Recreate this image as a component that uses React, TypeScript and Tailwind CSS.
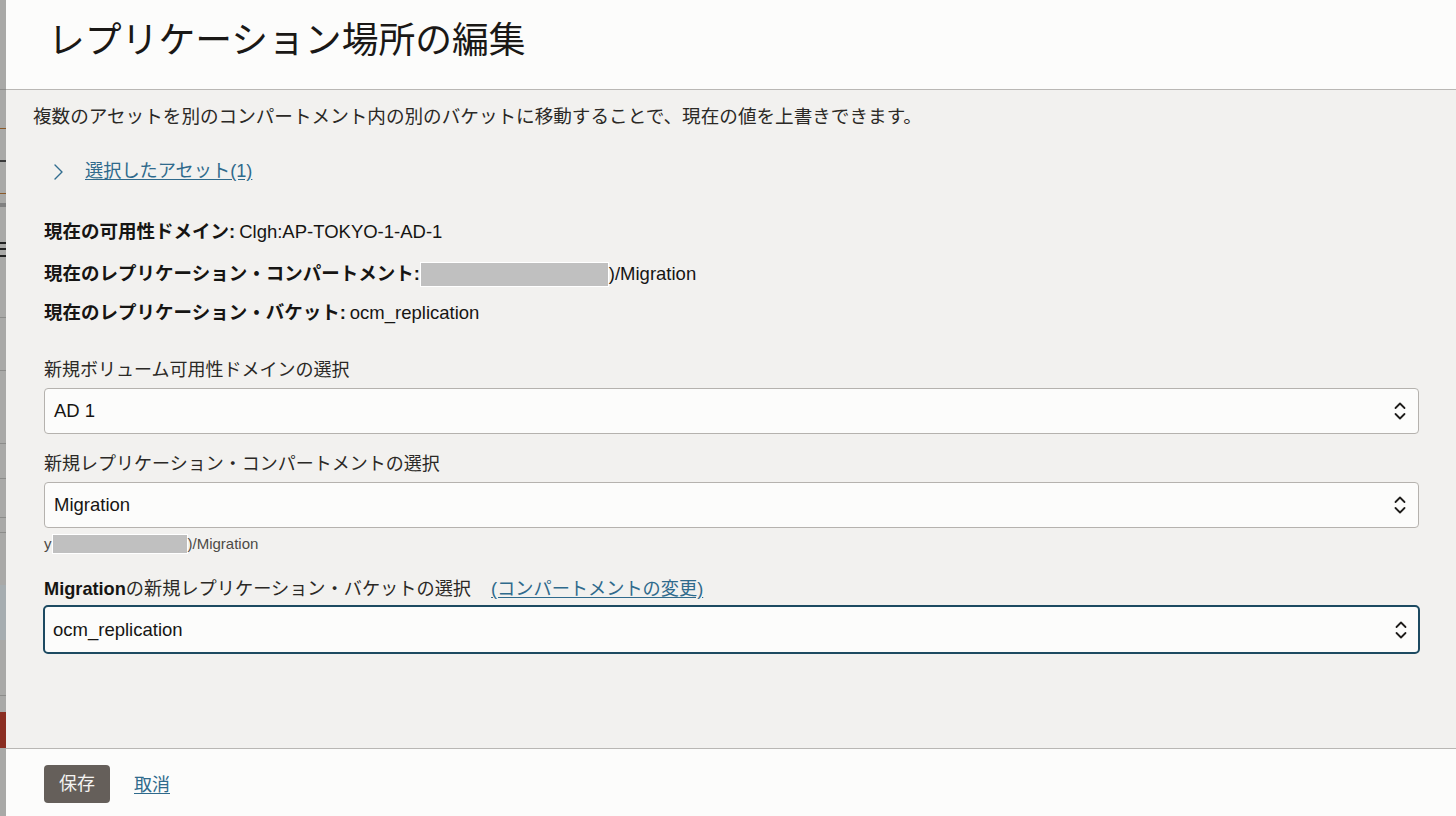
import React from "react";

const FONT = { fontFamily: '"Liberation Sans", "Noto Sans CJK JP", sans-serif' };

// marks on the page behind the panel: [top, height, colour]
const STRIP_MARKS: [number, number, string][] = [
  [89, 1, "#8e8e8c"],
  [128, 1, "#8a5a2a"],
  [160, 2, "#3a3a3a"],
  [193, 1, "#8a5a2a"],
  [203, 4, "#808080"],
  [242, 2, "#222"],
  [248, 2, "#222"],
  [255, 2, "#222"],
  [317, 1, "#8c8c8a"],
  [370, 1, "#8c8c8a"],
  [443, 1, "#8c8c8a"],
  [478, 1, "#8c8c8a"],
  [517, 1, "#8c8c8a"],
  [532, 1, "#8c8c8a"],
  [585, 55, "#a6adb0"],
  [695, 1, "#8c8c8a"],
  [712, 36, "#8b2e22"],
];

function LeftStrip() {
  let y = 0;
  return (
    <div className="w-[6px] shrink-0 bg-[#a9a9a7] flex flex-col">
      {STRIP_MARKS.map(([top, h, c], i) => {
        const gap = top - y;
        y = top + h;
        return <div key={i} style={{ marginTop: gap, height: h, background: c }} />;
      })}
    </div>
  );
}

function UpDown() {
  return (
    <svg width="14" height="22" viewBox="0 0 14 22" fill="none" stroke="#1f1d1b" strokeWidth="1.8" strokeLinecap="round" strokeLinejoin="round">
      <path d="M2.5 8 L7 3.5 L11.5 8" />
      <path d="M2.5 14 L7 18.5 L11.5 14" />
    </svg>
  );
}

function Select({ value, focused }: { value: string; focused?: boolean }) {
  return (
    <div
      className={
        focused
          ? "h-[49px] rounded-[5px] border-2 border-[#1d4a61] bg-[#fcfcfb] flex items-center justify-between pl-[8px] pr-[10px]"
          : "h-[46px] rounded-[4px] border border-[#b5b2ae] bg-[#fcfcfb] flex items-center justify-between pl-[9px] pr-[11px]"
      }
    >
      <span className="text-[18.5px] text-[#161513]">{value}</span>
      <UpDown />
    </div>
  );
}

export default function App() {
  return (
    <div className="w-[1456px] h-[816px] flex overflow-hidden text-[#161513]" style={FONT}>
      <LeftStrip />
      <div className="flex-1 flex flex-col">
        <header className="h-[90px] shrink-0 bg-[#fcfcfb] border-b border-[#b9b7b4] pl-[42px] pt-[16px]">
          <h1 className="text-[36.8px] leading-[50px] font-normal text-[#1a1816]">レプリケーション場所の編集</h1>
        </header>

        <main className="flex-1 bg-[#f2f1ef] pl-[38px] pr-[37px] flex flex-col">
          <p className="mt-[15px] -ml-[11px] text-[18.6px] leading-[24px] text-[#2b2926] whitespace-nowrap">
            複数のアセットを別のコンパートメント内の別のバケットに移動することで、現在の値を上書きできます。
          </p>

          <div className="mt-[31px] h-[24px] flex items-center">
            <svg width="12" height="18" viewBox="0 0 12 18" className="ml-[8px]" fill="none" stroke="#316d8f" strokeWidth="1.4" strokeLinecap="round" strokeLinejoin="round">
              <path d="M3 2 L10 9 L3 16" />
            </svg>
            <a className="ml-[21px] text-[18.2px] text-[#2f6a8c] underline underline-offset-2">選択したアセット(1)</a>
          </div>

          <div className="mt-[36px] h-[24px] text-[18.5px] leading-[24px] flex items-center whitespace-nowrap">
            <span className="font-bold">現在の可用性ドメイン:</span>
            <span className="ml-[4px]">Clgh:AP-TOKYO-1-AD-1</span>
          </div>
          <div className="mt-[18px] h-[24px] text-[18.5px] leading-[24px] flex items-center whitespace-nowrap">
            <span className="font-bold">現在のレプリケーション・コンパートメント:</span>
            <span className="inline-block h-[25px] w-[189px] shrink-0 bg-[#c0c0c0] border border-white" />
            <span>)/Migration</span>
          </div>
          <div className="mt-[15px] h-[24px] text-[18.5px] leading-[24px] flex items-center whitespace-nowrap">
            <span className="font-bold">現在のレプリケーション・バケット:</span>
            <span className="ml-[4px]">ocm_replication</span>
          </div>

          <label className="mt-[33px] h-[24px] text-[18px] leading-[24px] text-[#2b2926]">新規ボリューム可用性ドメインの選択</label>
          <div className="mt-[6px]">
            <Select value="AD 1" />
          </div>

          <label className="mt-[18px] h-[24px] text-[18px] leading-[24px] text-[#2b2926]">新規レプリケーション・コンパートメントの選択</label>
          <div className="mt-[6px]">
            <Select value="Migration" />
          </div>
          <div className="mt-[6px] h-[20px] text-[15px] leading-[20px] text-[#4d4a46] flex items-center whitespace-nowrap">
            <span>y</span>
            <span className="inline-block h-[20px] w-[136px] shrink-0 bg-[#c0c0c0] border border-white" />
            <span>)/Migration</span>
          </div>

          <div className="mt-[23px] h-[24px] text-[18.2px] leading-[24px] flex items-center whitespace-nowrap">
            <span className="font-bold">Migration</span>
            <span className="text-[#2b2926]">の新規レプリケーション・バケットの選択</span>
            <a className="ml-[20px] text-[#2f6a8c] underline underline-offset-2">(コンパートメントの変更)</a>
          </div>
          <div className="mt-[4px] -ml-[1px] -mr-[1px]">
            <Select value="ocm_replication" focused />
          </div>
        </main>

        <footer className="h-[68px] shrink-0 bg-[#fcfcfb] border-t border-[#b9b7b4] pl-[38px] pt-[16px] flex items-start">
          <button className="h-[38px] w-[66px] rounded-[4px] bg-[#655f5a] text-[#f4f3f1] text-[18px]">保存</button>
          <a className="ml-[24px] mt-[7px] text-[18px] text-[#2f6a8c] underline underline-offset-2">取消</a>
        </footer>
      </div>
    </div>
  );
}
